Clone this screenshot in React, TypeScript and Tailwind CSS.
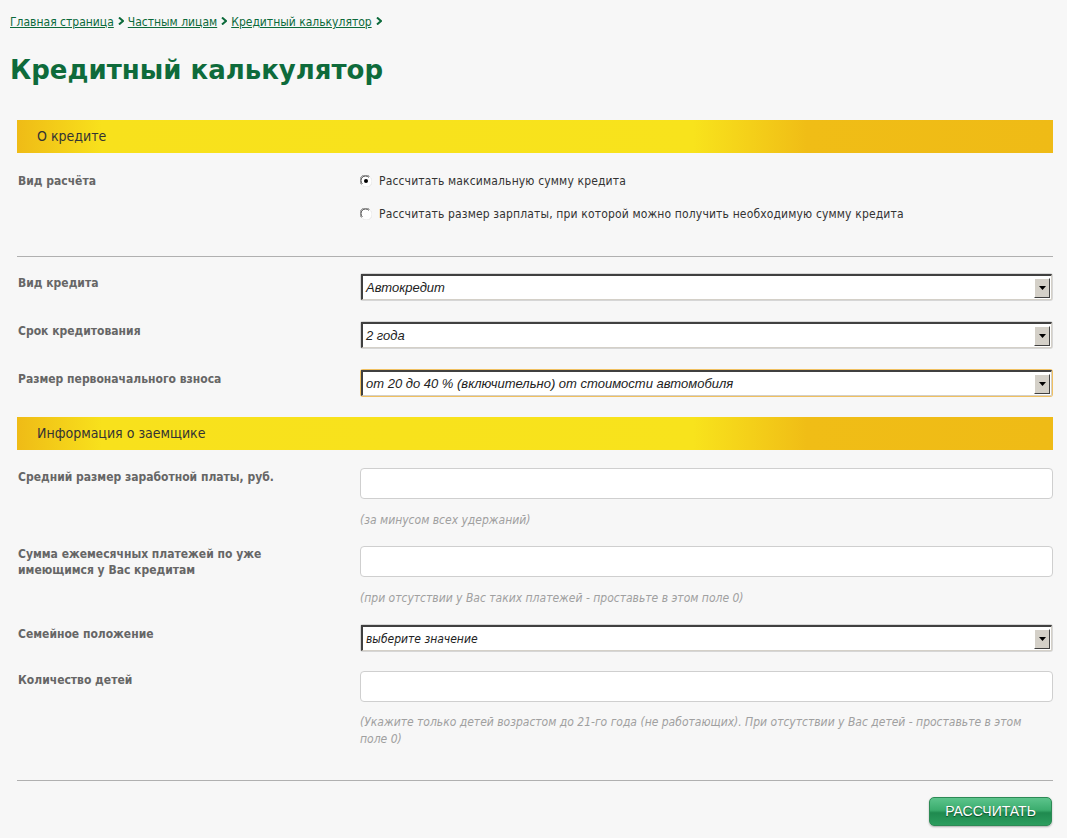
import React from "react";

const tahoma = { fontFamily: '"DejaVu Sans Condensed", "DejaVu Sans", sans-serif' };
const arial = { fontFamily: '"Liberation Sans", Arial, sans-serif' };

function Arrow() {
  return (
    <span className="mx-[4px] inline-block">
      <svg width="6" height="8" viewBox="0 0 6 8" className="inline-block align-[1px]">
        <path d="M1 0.5 L5 4 L1 7.5" stroke="#0c6a3b" strokeWidth="2" fill="none" />
      </svg>
    </span>
  );
}

function SectionBar({ title, className = "" }: { title: string; className?: string }) {
  return (
    <div
      className={"h-[33px] flex items-center pl-[20px] text-[14px] text-[#333] " + className}
      style={{
        ...tahoma,
        background:
          "linear-gradient(to right, #efbb16 0px, #f8e11c 85px, #f8e31c 676px, #f0bd16 790px, #efbb16 100%)",
      }}
    >
      {title}
    </div>
  );
}

function Label({ children }: { children: React.ReactNode }) {
  return (
    <div className="w-[342px] shrink-0 text-[12px] font-bold text-[#666] leading-[16px]" style={tahoma}>
      {children}
    </div>
  );
}

function Select({ value, focus = false, small = false }: { value: string; focus?: boolean; small?: boolean }) {
  return (
    <div className={"h-[28px] flex-1 rounded-[3px] p-[1px] " + (focus ? "bg-[#f0c060]" : "bg-[#d6d6d6]")}>
      <div className="h-full flex items-center bg-white border-t-[2px] border-l-[2px] border-t-[#404040] border-l-[#404040] border-b border-r border-b-[#d4d0c8] border-r-[#d4d0c8]">
        <div
          className={"flex-1 pl-[3px] italic text-[#222] " + (small ? "text-[12px]" : "text-[13px]")}
          style={small ? tahoma : arial}
        >
          {value}
        </div>
        <div className="w-[16px] h-[20px] mr-[1px] bg-[#d4d0c8] border-t border-l border-t-white border-l-white border-b border-r border-b-[#404040] border-r-[#404040] flex items-center justify-center">
          <svg width="7" height="4" viewBox="0 0 7 4">
            <path d="M0 0 H7 L3.5 4 Z" fill="#000" />
          </svg>
        </div>
      </div>
    </div>
  );
}

function Input() {
  return <div className="h-[31px] w-full rounded-[4px] border border-[#cfcfcf] bg-white" />;
}

function Hint({ children }: { children: React.ReactNode }) {
  return (
    <div className="italic text-[12px] text-[#a0a0a0] leading-[17px]" style={tahoma}>
      {children}
    </div>
  );
}

function Radio({ checked }: { checked?: boolean }) {
  return (
    <svg width="12" height="12" viewBox="0 0 12 12" className="shrink-0">
      <circle cx="6" cy="6" r="5.5" fill="#fff" />
      <path d="M1.5 9.5 A5 5 0 0 1 9.5 1.5" stroke="#808080" strokeWidth="1" fill="none" />
      <path d="M2.3 8.8 A4 4 0 0 1 8.8 2.3" stroke="#404040" strokeWidth="1" fill="none" />
      <path d="M10.5 2.5 A5 5 0 0 1 2.5 10.5" stroke="#e8e8e8" strokeWidth="1" fill="none" />
      {checked && <circle cx="6" cy="6" r="2" fill="#000" />}
    </svg>
  );
}

export default function App() {
  return (
    <div className="min-h-[838px] w-full bg-[#f7f7f7] text-[#333]" style={tahoma}>
      <div className="pl-[10px] pt-[14px] text-[12px] leading-[16px]" style={tahoma}>
        <a className="text-[#0c6a3b] underline">Главная страница</a>
        <Arrow />
        <a className="text-[#0c6a3b] underline">Частным лицам</a>
        <Arrow />
        <a className="text-[#0c6a3b] underline">Кредитный калькулятор</a>
        <Arrow />
      </div>
      <h1
        className="pl-[10px] mt-[24px] text-[26px] font-bold text-[#0e6b3b] leading-[32px]"
        style={{ fontFamily: '"DejaVu Sans", Verdana, sans-serif' }}
      >
        Кредитный калькулятор
      </h1>

      <div className="ml-[17px] mr-[14px] mt-[34px]">
        <SectionBar title="О кредите" />

        <div className="flex pt-[20px] pl-[1px]">
          <Label>Вид расчёта</Label>
          <div className="flex flex-col gap-[17px] text-[12px] text-[#333] tracking-[0.15px]" style={tahoma}>
            <div className="flex items-center gap-[7px] h-[16px]">
              <Radio checked />
              <span>Рассчитать максимальную сумму кредита</span>
            </div>
            <div className="flex items-center gap-[7px] h-[16px]">
              <Radio />
              <span>Рассчитать размер зарплаты, при которой можно получить необходимую сумму кредита</span>
            </div>
          </div>
        </div>

        <div className="mt-[34px] h-px bg-[#b0b0b0]" />

        <div className="flex flex-col gap-[20px] pt-[16px]">
          <div className="flex items-start pl-[1px]">
            <Label><div className="pt-[2px]">Вид кредита</div></Label>
            <Select value="Автокредит" />
          </div>
          <div className="flex items-start pl-[1px]">
            <Label><div className="pt-[2px]">Срок кредитования</div></Label>
            <Select value="2 года" />
          </div>
          <div className="flex items-start pl-[1px]">
            <Label><div className="pt-[2px]">Размер первоначального взноса</div></Label>
            <Select value="от 20 до 40 % (включительно) от стоимости автомобиля" focus />
          </div>
        </div>

        <SectionBar title="Информация о заемщике" className="mt-[20px]" />

        <div className="pt-[18px]">
          <div className="flex items-start pl-[1px]">
            <Label><div className="pt-[1px]">Средний размер заработной платы, руб.</div></Label>
            <div className="flex-1 flex flex-col">
              <Input />
              <div className="pt-[13px]"><Hint>(за минусом всех удержаний)</Hint></div>
            </div>
          </div>

          <div className="flex items-start pl-[1px] mt-[17px]">
            <Label>
              Сумма ежемесячных платежей по уже
              <br />
              имеющимся у Вас кредитам
            </Label>
            <div className="flex-1 flex flex-col">
              <Input />
              <div className="pt-[13px]"><Hint>(при отсутствии у Вас таких платежей - проставьте в этом поле 0)</Hint></div>
            </div>
          </div>

          <div className="flex items-start pl-[1px] mt-[17px]">
            <Label><div className="pt-[2px]">Семейное положение</div></Label>
            <Select value="выберите значение" small />
          </div>

          <div className="flex items-start pl-[1px] mt-[19px]">
            <Label><div className="pt-[1px]">Количество детей</div></Label>
            <div className="flex-1 flex flex-col">
              <Input />
              <div className="pt-[12px] pr-[20px]">
                <Hint>
                  (Укажите только детей возрастом до 21-го года (не работающих). При отсутствии у Вас детей - проставьте в этом поле 0)
                </Hint>
              </div>
            </div>
          </div>
        </div>

        <div className="mt-[32px] h-px bg-[#b0b0b0]" />

        <div className="flex justify-end pt-[16px] pr-[1px]">
          <button
            className="w-[123px] h-[29px] rounded-[5px] text-white text-[14px] border border-[#2d8a55]"
            style={{
              ...arial,
              background: "linear-gradient(to bottom, #5cc48c 0%, #3bac6d 45%, #1f8a4f 55%, #2c9d5e 100%)",
              textShadow: "0 1px 1px #0a4a25",
              boxShadow: "0 1px 2px rgba(0,0,0,0.3)",
            }}
          >
            РАССЧИТАТЬ
          </button>
        </div>
      </div>
    </div>
  );
}
